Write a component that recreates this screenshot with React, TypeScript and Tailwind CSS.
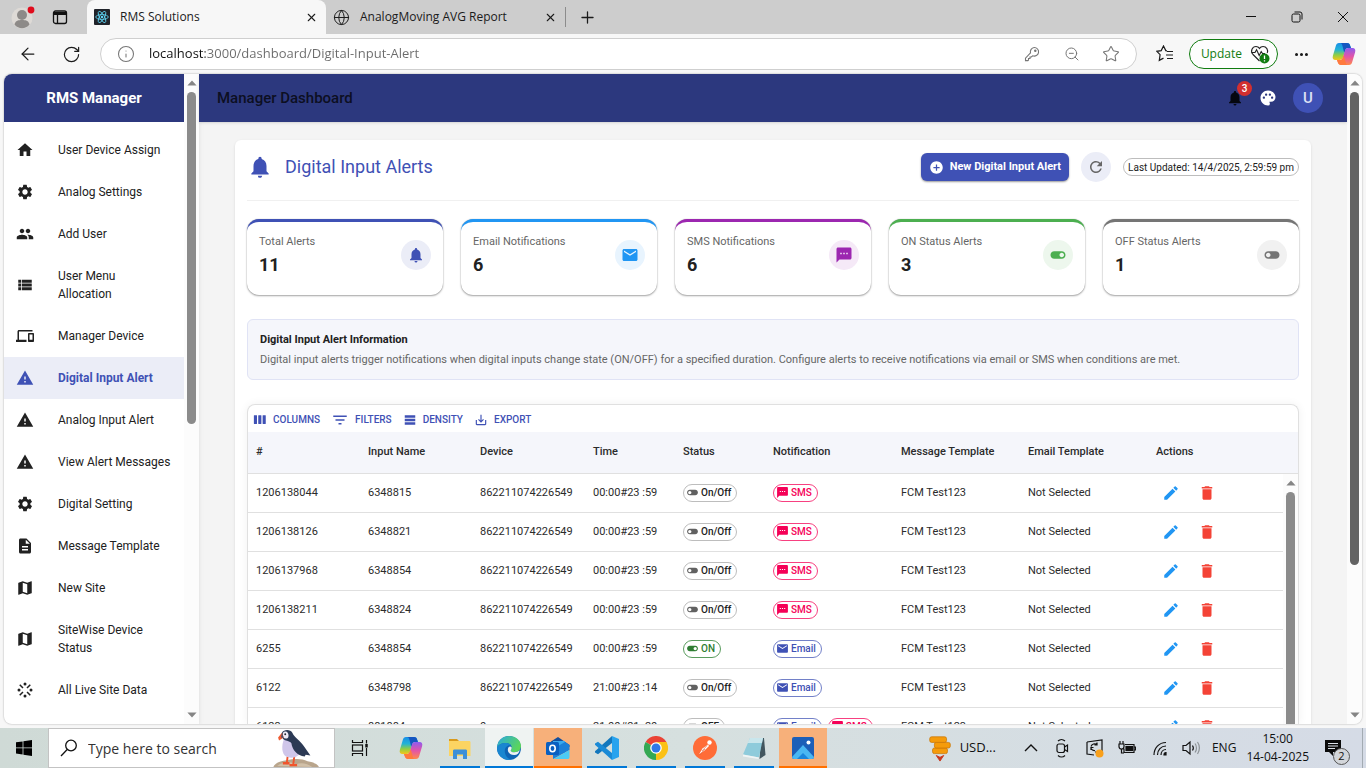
import React from "react";
import clsx from "clsx";
import { ArrowLeft, Ellipsis, Globe, Info, Plus, RotateCw, Star, X, ZoomOut } from "lucide-react";
import {
    MdAddCircle,
    MdCreate,
    MdDelete,
    MdDescription,
    MdDevices,
    MdEmail,
    MdFilterList,
    MdHome,
    MdMap,
    MdNotifications,
    MdPalette,
    MdPeople,
    MdRefresh,
    MdSaveAlt,
    MdSettings,
    MdStream,
    MdTableRows,
    MdTextsms,
    MdToggleOff,
    MdToggleOn,
    MdViewList,
    MdWarning,
} from "react-icons/md";

const menuItems = [
    { label: "User Device Assign", icon: MdHome },
    { label: "Analog Settings", icon: MdSettings },
    { label: "Add User", icon: MdPeople },
    { label: "User Menu\nAllocation", icon: MdViewList },
    { label: "Manager Device", icon: MdDevices },
    { label: "Digital Input Alert", icon: MdWarning, active: true },
    { label: "Analog Input Alert", icon: MdWarning },
    { label: "View Alert Messages", icon: MdWarning },
    { label: "Digital Setting", icon: MdSettings },
    { label: "Message Template", icon: MdDescription },
    { label: "New Site", icon: MdMap },
    { label: "SiteWise Device\nStatus", icon: MdMap },
    { label: "All Live Site Data", icon: MdStream },
];

const stats = [
    { label: "Total Alerts", value: 11, icon: MdNotifications, border: "border-t-[#3f51b5]", badge: "bg-[#ebedf7] text-[#3f51b5]" },
    { label: "Email Notifications", value: 6, icon: MdEmail, border: "border-t-[#2196f3]", badge: "bg-[#e8f4fe] text-[#2196f3]" },
    { label: "SMS Notifications", value: 6, icon: MdTextsms, border: "border-t-[#9c27b0]", badge: "bg-[#f5e9f7] text-[#9c27b0]" },
    { label: "ON Status Alerts", value: 3, icon: MdToggleOn, border: "border-t-[#4caf50]", badge: "bg-[#edf7ed] text-[#4caf50]" },
    { label: "OFF Status Alerts", value: 1, icon: MdToggleOff, border: "border-t-[#757575]", badge: "bg-[#f1f1f1] text-[#757575]" },
];

const rows = [
    { id: "1206138044", name: "6348815", device: "862211074226549", time: "00:00#23 :59", status: "On/Off", notify: ["SMS"] },
    { id: "1206138126", name: "6348821", device: "862211074226549", time: "00:00#23 :59", status: "On/Off", notify: ["SMS"] },
    { id: "1206137968", name: "6348854", device: "862211074226549", time: "00:00#23 :59", status: "On/Off", notify: ["SMS"] },
    { id: "1206138211", name: "6348824", device: "862211074226549", time: "00:00#23 :59", status: "On/Off", notify: ["SMS"] },
    { id: "6255", name: "6348854", device: "862211074226549", time: "00:00#23 :59", status: "ON", notify: ["Email"] },
    { id: "6122", name: "6348798", device: "862211074226549", time: "21:00#23 :14", status: "On/Off", notify: ["Email"] },
    { id: "6123", name: "881884", device: "0", time: "21:00#21 :20", status: "OFF", notify: ["Email", "SMS"] },
];

const columns = [
    { title: "#", width: "w-[112px]" },
    { title: "Input Name", width: "w-[112px]" },
    { title: "Device", width: "w-[113px]" },
    { title: "Time", width: "w-[90px]" },
    { title: "Status", width: "w-[90px]" },
    { title: "Notification", width: "w-[128px]" },
    { title: "Message Template", width: "w-[127px]" },
    { title: "Email Template", width: "w-[128px]" },
    { title: "Actions", width: "w-auto" },
];

const ColumnsIcon = () => (
    <svg viewBox="0 0 24 24" className="size-[15px]" fill="currentColor">
        <rect x="3" y="5" width="5" height="14" rx="0.5" />
        <rect x="10" y="5" width="5" height="14" rx="0.5" />
        <rect x="17" y="5" width="5" height="14" rx="0.5" />
    </svg>
);

const CopilotLogo = ({ className }: { className: string }) => (
    <svg viewBox="0 0 24 24" className={className}>
        <defs>
            <linearGradient id="copilotLeft" x1="0" y1="0" x2="0" y2="1">
                <stop offset="0" stopColor="#1a8fe8" />
                <stop offset="0.4" stopColor="#22b3d6" />
                <stop offset="0.7" stopColor="#8fce45" />
                <stop offset="1" stopColor="#f5c518" />
            </linearGradient>
            <linearGradient id="copilotRight" x1="0" y1="0" x2="0" y2="1">
                <stop offset="0" stopColor="#8e5bf0" />
                <stop offset="0.5" stopColor="#e254a8" />
                <stop offset="1" stopColor="#ff8a4c" />
            </linearGradient>
        </defs>
        <path d="M7 1h8c1.600 0 2.600.8 3.100 2.400L19 6h-3c-1.500 0-2.300.8-2.800 2.300L11 15.500C10.400 17.300 9.400 18 7.800 18H3.500C1 18 .2 16.200.9 13.800L3.700 4.200C4.300 2 5.300 1 7 1Z" fill="url(#copilotLeft)" />
        <path d="M13 1h2c1.600 0 2.600.8 3.100 2.400L19 6h-3c-1.500 0-2.300.8-2.800 2.300l-.9 2.900L10.500 4C10 2.200 9.500 1 8 1Z" fill="#1556c0" />
        <path d="M17 23H9c-1.600 0-2.600-.8-3.100-2.400L5 18h3c1.500 0 2.300-.8 2.800-2.300L13 8.500C13.600 6.700 14.600 6 16.200 6h4.300c2.500 0 3.300 1.800 2.600 4.200l-2.800 9.600C19.700 22 18.700 23 17 23Z" fill="url(#copilotRight)" />
        <path d="M11 23H9c-1.600 0-2.600-.8-3.100-2.400L5 18h3c1.500 0 2.300-.8 2.800-2.300l.9-2.900 1.800 7.200c.5 1.800 1 3 2.500 3Z" fill="#ff7a3d" />
    </svg>
);

const ReactLogo = () => (
    <svg viewBox="0 0 16 16" className="size-4 shrink-0">
        <rect width="16" height="16" rx="1" fill="#20232a" />
        <g fill="none" stroke="#61dafb" strokeWidth="0.8">
            <ellipse cx="8" cy="8" rx="6.300" ry="2.400" />
            <ellipse cx="8" cy="8" rx="6.300" ry="2.400" transform="rotate(60 8 8)" />
            <ellipse cx="8" cy="8" rx="6.300" ry="2.400" transform="rotate(120 8 8)" />
        </g>
        <circle cx="8" cy="8" r="1.200" fill="#61dafb" />
    </svg>
);

const BrowserTabs = () => (
    <div className="flex h-[34px] shrink-0 items-stretch bg-[#cdcdcd] text-[12px] text-[#1b1b1b]">
        <button aria-label="Profile" className="ml-2.5 flex w-7 items-center">
            <svg viewBox="0 0 26 26" className="size-[26px]">
                <circle cx="12" cy="14" r="10.500" fill="#dedad6" />
                <circle cx="12" cy="11" r="5" fill="#8d8a88" />
                <path d="M4.500 20.500c1-4 4-4.500 7.500-4.500s6.500.5 7.500 4.500c-4 5-11 5-15 0Z" fill="#8d8a88" />
                <circle cx="21" cy="6" r="3.400" fill="#e00b1c" />
            </svg>
        </button>
        <button aria-label="Tab actions" className="flex w-[49px] items-center pl-3.5">
            <svg viewBox="0 0 16 16" className="size-4" fill="none" stroke="#111" strokeWidth="1.300">
                <rect x="1.500" y="2" width="13" height="12.500" rx="2" />
                <path d="M1.500 4.500h13" strokeWidth="3" />
                <path d="M5.500 5v9" />
            </svg>
        </button>
        <div className="flex w-[239px] items-center rounded-t-lg bg-[#f7f7f7] pl-[7px] pr-2">
            <ReactLogo />
            <span className="ml-2.5 flex-1">RMS Solutions</span>
            <button aria-label="Close tab">
                <X size={13} strokeWidth={2} />
            </button>
        </div>
        <div className="flex w-[239px] items-center pl-[7px] pr-2">
            <Globe size={17} strokeWidth={1.4} className="shrink-0" />
            <span className="ml-2.5 flex-1">AnalogMoving AVG Report</span>
            <button aria-label="Close tab">
                <X size={13} strokeWidth={2} />
            </button>
        </div>
        <button aria-label="New tab" className="my-[7px] flex items-center border-l border-[#8c8c8c] pl-3">
            <Plus size={19} strokeWidth={1.6} />
        </button>
        <div className="ml-auto flex items-center">
            <button aria-label="Minimize" className="flex w-[46px] justify-center">
                <svg viewBox="0 0 12 12" className="size-3" stroke="#111">
                    <path d="M1 5.500h10" />
                </svg>
            </button>
            <button aria-label="Restore" className="flex w-[46px] justify-center">
                <svg viewBox="0 0 12 12" className="size-3" fill="none" stroke="#111">
                    <rect x="1" y="3" width="8" height="8" rx="1.500" />
                    <path d="M3.500 1h5.500a2 2 0 0 1 2 2v5.500" />
                </svg>
            </button>
            <button aria-label="Close" className="flex w-[46px] justify-center">
                <svg viewBox="0 0 12 12" className="size-3" stroke="#111">
                    <path d="M1 1l10 10M11 1L1 11" />
                </svg>
            </button>
        </div>
    </div>
);

const AddressBar = () => (
    <div className="flex h-10 shrink-0 items-center bg-[#f7f7f7] pl-[18px] pr-2.5 text-[#1b1b1b]">
        <button aria-label="Back">
            <ArrowLeft size={20} strokeWidth={1.5} />
        </button>
        <button aria-label="Reload" className="ml-6">
            <RotateCw size={19} strokeWidth={1.5} />
        </button>
        <div className="ml-[19px] flex h-8 flex-1 items-center rounded-full border border-[#cfcfcf] bg-white px-4 text-[#767676]">
            <Info size={18} strokeWidth={1.4} className="shrink-0" />
            <input
                aria-label="Address"
                readOnly
                value="localhost:3000/dashboard/Digital-Input-Alert"
                className="ml-3.5 min-w-0 flex-1 bg-[linear-gradient(90deg,#111_56px,#6b6b6b_56px)] bg-clip-text text-[13px] text-transparent outline-none"
            />
            <button aria-label="Passwords">
                <svg viewBox="0 0 16 16" className="size-4" fill="none" stroke="currentColor" strokeWidth="1.100">
                    <path d="M10.200 1.500a4.300 4.300 0 1 1-1.500 8.300L7.300 11H6v1.500H4.500V14l-.6.600H1.500v-2.500l5-5.200a4.300 4.300 0 0 1 3.700-5.400Z" />
                    <circle cx="11.300" cy="4.700" r="0.700" fill="currentColor" />
                </svg>
            </button>
            <button aria-label="Zoom" className="ml-6">
                <ZoomOut size={16} strokeWidth={1.5} />
            </button>
            <button aria-label="Favourite" className="ml-[22px]">
                <Star size={18} strokeWidth={1.4} />
            </button>
        </div>
        <button aria-label="Favourites" className="ml-[19px]">
            <svg viewBox="0 0 18 18" className="size-[18px]" fill="none" stroke="currentColor" strokeWidth="1.200">
                <path d="M11 5.800 9.800 5.600 7.500 1 5.200 5.600.8 6.300l3.300 3.400-.8 5.600 4.200-2.200M11 6.500h6M10 10h7M11 13.500h6" />
            </svg>
        </button>
        <button className="ml-[15px] flex h-[30px] items-center gap-2 rounded-full border border-[#107c10] bg-[#fdfdfd] pl-[11px] pr-[7px] text-[12px] text-[#107c10]">
            Update
            <svg viewBox="0 0 20 20" className="size-5" fill="none" stroke="#222" strokeWidth="1.100">
                <path d="M9.500 17 3 10.500C-.2 7 2.500 2.500 6 2.500c1.600 0 2.700.7 3.500 1.900.8-1.200 1.900-1.900 3.500-1.900 3.500 0 5.500 3.500 4.200 6.500" />
                <path d="M1.500 8.500H5l1.600-2.800 2.600 5.800 2-4 1.300 2H15" />
                <circle cx="14.500" cy="14.500" r="5" fill="#107c10" stroke="none" />
                <path d="M14.500 11.500v3.500M14.500 16.200v1.300" stroke="#fff" strokeWidth="1.300" />
            </svg>
        </button>
        <button aria-label="Settings" className="ml-[15px]">
            <Ellipsis size={17} strokeWidth={2.3} />
        </button>
        <button aria-label="Copilot" className="ml-[22px]">
            <CopilotLogo className="size-6" />
        </button>
    </div>
);

const ScrollArrow = ({ down = false }: { down?: boolean }) => (
    <svg viewBox="0 0 10 6" className={clsx("h-1.5 w-2.5 shrink-0", down && "rotate-180")}>
        <path d="M5 0.500 9.600 5.500H0.400Z" fill="#858585" />
    </svg>
);

const Scrollbar = ({ thumb }: { thumb: string }) => (
    <div className="flex w-[15px] shrink-0 flex-col items-center bg-[#fcfcfc] py-1.5">
        <ScrollArrow />
        <div className="flex min-h-0 flex-1 flex-col py-1.5">
            <div className={clsx("w-[9px] rounded-full", thumb)} />
        </div>
        <ScrollArrow down />
    </div>
);

const Sidebar = () => (
    <aside className="z-10 flex w-[195px] shrink-0 bg-white shadow-md">
        <div className="min-w-0 flex-1">
            <div className="flex h-12 items-center justify-center bg-[#2c387e] text-[15px] font-bold text-white">RMS Manager</div>
            <nav className="pt-[7px]">
                {menuItems.map(({ label, icon: Icon, active }) => (
                    <a
                        key={label}
                        href="#"
                        className={clsx(
                            "flex items-center gap-6 whitespace-pre-line py-3 pl-3 pr-2 text-[12px] leading-[18px]",
                            active ? "bg-[#ebedf7] font-bold text-[#3f51b5]" : "text-[#212121]"
                        )}
                    >
                        <span className="flex w-[18px] shrink-0">
                            <Icon size={18} />
                        </span>
                        {label}
                    </a>
                ))}
            </nav>
        </div>
        <Scrollbar thumb="h-[54%] bg-[#8b8b8b]" />
    </aside>
);

const TopBar = () => (
    <header className="z-10 flex h-12 shrink-0 items-center bg-[#2c387e] pl-[18px] pr-6 shadow">
        <h1 className="flex-1 text-[15px] font-medium text-[#0c0f22]">Manager Dashboard</h1>
        <button aria-label="Notifications" className="relative text-[#05070f]">
            <MdNotifications size={18} />
            <span className="absolute -right-2 -top-2 flex size-[15px] items-center justify-center rounded-full bg-[#d32f2f] text-[10px] font-medium text-white">
                3
            </span>
        </button>
        <button aria-label="Theme" className="ml-[15px] text-white">
            <MdPalette size={18} />
        </button>
        <button className="ml-4 flex size-[30px] items-center justify-center rounded-full bg-[#3f51b5] text-[15px] font-medium text-[#dde1f5]">U</button>
    </header>
);

const StatCard = ({ label, value, icon: Icon, border, badge }: (typeof stats)[number]) => (
    <div
        className={clsx(
            "flex h-[76px] justify-between rounded-xl border-t-[3px] bg-white px-3 shadow-[0_1px_2px_rgba(0,0,0,0.35),0_0_1px_rgba(0,0,0,0.3)]",
            border
        )}
    >
        <div className="pt-2">
            <p className="text-[11px] leading-6 text-[#666]">{label}</p>
            <p className="text-[18px] leading-[22px] font-bold text-[#212121]">{value}</p>
        </div>
        <span className={clsx("mt-[18px] flex size-[30px] items-center justify-center rounded-full", badge)}>
            <Icon size={18} />
        </span>
    </div>
);

const Chip = ({ label }: { label: string }) => {
    const styles: Record<string, string> = {
        "On/Off": "border-[#bdbdbd] text-[#212121]",
        OFF: "border-[#bdbdbd] text-[#212121]",
        ON: "border-[#5a9c5e] text-[#2e7d32]",
        SMS: "border-[#f74080] text-[#f50057]",
        Email: "border-[#7280c8] text-[#3f51b5]",
    };

    return (
        <span className={clsx("inline-flex h-[18px] items-center gap-0.5 rounded-full border pl-0.5 pr-[5px] text-[10px] font-medium", styles[label])}>
            {label === "SMS" && <MdTextsms size={13} />}
            {label === "Email" && <MdEmail size={13} />}
            {label === "ON" && <MdToggleOn size={13} />}
            {(label === "On/Off" || label === "OFF") && <MdToggleOff size={13} className="text-[#616161]" />}
            {label}
        </span>
    );
};

const AlertTable = () => (
    <section className="relative mt-6 min-h-0 flex-1 overflow-hidden rounded-t-lg border border-b-0 border-[#e0e0e0] shadow-[0_0_10px_rgba(0,0,0,0.06)]">
        <div className="flex h-[27px] items-center gap-[11px] pl-1 pt-0.5 text-[10px] font-medium text-[#3f51b5]">
            <button className="flex items-center gap-1.5">
                <ColumnsIcon />
                COLUMNS
            </button>
            <button className="flex items-center gap-1.5">
                <MdFilterList size={18} />
                FILTERS
            </button>
            <button className="flex items-center gap-1.5">
                <MdTableRows size={14} />
                DENSITY
            </button>
            <button className="flex items-center gap-1.5">
                <MdSaveAlt size={14} />
                EXPORT
            </button>
        </div>
        <table className="w-full table-fixed border-collapse text-left text-[11px] text-[#2b2b2b]">
            <thead>
                <tr className="h-[41px] border-b border-[#e0e0e0] bg-[#f5f6fb]">
                    {columns.map(({ title, width }) => (
                        <th key={title} className={clsx("px-2 font-medium", width)}>
                            {title}
                        </th>
                    ))}
                </tr>
            </thead>
            <tbody>
                {rows.map((row) => (
                    <tr key={row.id} className="h-[39px] whitespace-nowrap border-b border-[#e0e0e0]">
                        <td className="px-2 pt-0.5">{row.id}</td>
                        <td className="px-2 pt-0.5">{row.name}</td>
                        <td className="px-2 pt-0.5">{row.device}</td>
                        <td className="px-2 pt-0.5">{row.time}</td>
                        <td className="px-2">
                            <div className="flex">
                                <Chip label={row.status} />
                            </div>
                        </td>
                        <td className="px-2">
                            <div className="flex gap-1.5">
                                {row.notify.map((kind) => (
                                    <Chip key={kind} label={kind} />
                                ))}
                            </div>
                        </td>
                        <td className="px-2 pt-0.5">FCM Test123</td>
                        <td className="px-2 pt-0.5">Not Selected</td>
                        <td className="px-2">
                            <div className="flex gap-[18px] pl-1.5">
                                <button aria-label="Edit" className="text-[#2196f3]">
                                    <MdCreate size={18} />
                                </button>
                                <button aria-label="Delete" className="text-[#f44336]">
                                    <MdDelete size={18} />
                                </button>
                            </div>
                        </td>
                    </tr>
                ))}
            </tbody>
        </table>
        <div className="absolute bottom-0 right-0 top-[69px] flex w-[15px] flex-col items-center gap-1.5 bg-[#fcfcfc] pt-1.5">
            <ScrollArrow />
            <div className="w-[9px] flex-1 rounded-t-full bg-[#8b8b8b]" />
        </div>
    </section>
);

const Dashboard = () => (
    <main className="flex min-h-0 flex-1 flex-col bg-[#f4f4f4] px-9 pt-[18px]">
        <div className="flex min-h-0 flex-1 flex-col rounded-t-md bg-white px-3 pt-3 shadow-sm">
            <div className="flex h-[49px] items-start gap-3 border-b border-[#f0f0f0]">
                <MdNotifications size={26} className="mt-0.5 text-[#3f51b5]" />
                <h2 className="flex-1 text-[18px] leading-[30px] text-[#3f51b5]">Digital Input Alerts</h2>
                <button className="mt-px flex h-7 items-center gap-1.5 rounded-md bg-[#3f51b5] px-2 text-[11px] font-bold text-white shadow-[0_1px_2px_rgba(0,0,0,0.4)]">
                    <MdAddCircle size={15} />
                    New Digital Input Alert
                </button>
                <button aria-label="Refresh" className="flex size-[30px] items-center justify-center rounded-full bg-[#ebedf7] text-[#666]">
                    <MdRefresh size={18} />
                </button>
                <span className="mt-1.5 flex h-[18px] items-center rounded-full border border-[#bdbdbd] px-1 text-[10px] text-[#212121]">
                    Last Updated: 14/4/2025, 2:59:59 pm
                </span>
            </div>

            <div className="mt-[18px] grid shrink-0 grid-cols-5 gap-[18px]">
                {stats.map((stat) => (
                    <StatCard key={stat.label} {...stat} />
                ))}
            </div>

            <div className="mt-6 shrink-0 rounded-md border border-[#e0e3f5] bg-[#f5f6fb] px-3 pb-[9px] pt-2.5">
                <h3 className="text-[11px] leading-5 font-bold text-[#212121]">Digital Input Alert Information</h3>
                <p className="text-[11px] leading-5 text-[#666]">
                    Digital input alerts trigger notifications when digital inputs change state (ON/OFF) for a specified duration. Configure alerts to receive
                    notifications via email or SMS when conditions are met.
                </p>
            </div>

            <AlertTable />
        </div>
    </main>
);

const Puffin = () => (
    <svg viewBox="0 0 54 40" className="mr-2 h-[38px] w-[54px] shrink-0 self-end">
        <path d="M0 40c2-5 8-6 14-7 8-2 16-2 22 1 6 1 11 3 12 6Z" fill="#b9a58c" />
        <path d="M4 39c6-5 14-5 20-2 5-2 12-1 17 3Z" fill="#d1c0a8" />
        <path d="M15 29l-1 8M22 29l-1 8" stroke="#f0552d" strokeWidth="2" />
        <path d="M10 36h7M17 38h8" stroke="#f0552d" strokeWidth="2.500" />
        <path d="M12 9c-3 6-4 14 0 19 4 3 11 3 15-1 1-8-4-17-9-19Z" fill="#cfc6ea" />
        <path d="M9 4c2-4 9-4 11 0 2 5 8 8 12 14l7 10-5-1-1 2c-8-1-13-7-14-14-2-3-7-2-9-5Z" fill="#2c3a55" />
        <path d="M10 4c3-3 6-1 6 3 0 3-3 4-6 2Z" fill="#eeeaf6" />
        <path d="M9 4 5 9l1 3 5-3Z" fill="#ef5a31" />
        <path d="M9 4 8 9l3 .5Z" fill="#485068" />
        <circle cx="12.500" cy="5.500" r="1" fill="#272b38" />
    </svg>
);

const FolderLogo = () => (
    <svg viewBox="0 0 24 24" className="size-6">
        <path d="M1 3h8l2 2v4H1Z" fill="#d99a1c" />
        <path d="M1 5h20c1 0 1.500.5 1.500 1.500V20H1Z" fill="#fcd462" />
        <path d="M5 23v-8c0-1 .5-1.500 1.500-1.500h11c1 0 1.500.5 1.500 1.500v8h-4v-4.500H9V23Z" fill="#3d8fd8" />
    </svg>
);

const EdgeLogo = () => (
    <svg viewBox="0 0 24 24" className="size-6">
        <defs>
            <linearGradient id="edgeTop" x1="0" y1="0" x2="1" y2="0.500">
                <stop offset="0" stopColor="#2aa9e0" />
                <stop offset="1" stopColor="#5bd65a" />
            </linearGradient>
        </defs>
        <circle cx="12" cy="12" r="12" fill="#0f64b4" />
        <path d="M0 11.500C.6 4.700 5.800 0 12 0c7 0 12 4.600 12 10 0 3.800-3 6.200-6.500 6.200-2.600 0-3.800-.8-3.800-1.800 0-.7 1-1.200 1-3C14.700 8.800 12 7 8.500 7 4.500 7 1.200 8.800 0 11.500Z" fill="url(#edgeTop)" />
        <path d="M0 11.500C1.200 8.800 4.500 7 8.500 7c2.500 0 4.600 1 5.600 2.500C10.500 8.300 6.800 12 8 17c.7 3.200 3 5.800 6.400 6.700C7 25-.3 19.600 0 11.500Z" fill="#1a86d0" />
        <path d="M14.700 11.400c0 1.800-1 2.300-1 3 0 1 1.200 1.800 3.800 1.800 2 0 4-.7 5.200-2.200-.4 3-2.500 5-5.500 5-4 0-6.800-2.800-6.300-6 .3-2 2-3.300 3.800-1.600Z" fill="#eef2f2" />
    </svg>
);

const OutlookLogo = () => (
    <svg viewBox="0 0 24 24" className="size-6">
        <path d="M12 1 5 5.500V11h18.500V9Z" fill="#124e9c" />
        <path d="M7 5h12v12H7Z" fill="#38a9ee" />
        <path d="M19 6l4.500 3v5L7 23V13Z" fill="#1a7fd8" />
        <path d="M23.500 9.500V21c0 1.500-1 2-2 2H7.500l16-9Z" fill="#4ccbf5" />
        <rect y="6" width="13" height="13" rx="1.500" fill="#0a5fc0" />
        <ellipse cx="6.500" cy="12.500" rx="2.700" ry="3.200" fill="none" stroke="#fff" strokeWidth="1.600" />
    </svg>
);

const VsCodeLogo = () => (
    <svg viewBox="0 0 24 24" className="size-6">
        <path d="M17 0v7L3 18.200 0 16.500v-1.300Z" fill="#1277bd" />
        <path d="M17 24v-7L3 5.800 0 7.500v1.300Z" fill="#1a8ad6" />
        <path d="M17 0l7 3v18l-7 3Z" fill="#28a3ee" />
    </svg>
);

const ChromeLogo = () => (
    <svg viewBox="0 0 24 24" className="size-6">
        <path d="M12 12 1.600 6A12 12 0 0 1 22.400 6Z" fill="#ea4335" />
        <path d="M12 12 22.400 6A12 12 0 0 1 12 24Z" fill="#fbc116" />
        <path d="M12 12v12A12 12 0 0 1 1.600 6Z" fill="#34a853" />
        <path d="M12 6h10.400a12 12 0 0 1 .8 2L17 14.500ZM12 24l5.200-9H12Z" fill="#fbc116" />
        <circle cx="12" cy="12" r="5.800" fill="#fff" />
        <circle cx="12" cy="12" r="4.500" fill="#2f78e8" />
    </svg>
);

const PostmanLogo = () => (
    <svg viewBox="0 0 24 24" className="size-6">
        <circle cx="12" cy="12" r="12" fill="#ff6c37" />
        <circle cx="16.500" cy="6.500" r="2.200" fill="#fff" />
        <path d="M15 8.500 9.500 12.500l-3.500 6 5.500-4 4.500-4.500Z" fill="#fff" />
        <path d="M14 9.500 9 15M12 13l-5.500 6" stroke="#d4532a" strokeWidth="0.600" />
    </svg>
);

const NotepadLogo = () => (
    <svg viewBox="0 0 24 24" className="size-6">
        <path d="M19 2h3l1.500 17-6 4Z" fill="#42565f" />
        <path d="M8 2h13l-4 19.500L1 18.500Z" fill="#8ecbdb" />
        <path d="M8 2h13l-1 5L5.500 7Z" fill="#c9e6ec" />
        <path d="M1 18.500 17 21.500l-.5 1.500L1 20.500Z" fill="#eef4f5" />
    </svg>
);

const PhotosLogo = () => (
    <svg viewBox="0 0 24 24" className="size-6">
        <rect x="1" y="1" width="22" height="22" rx="2" fill="#1c5fb8" />
        <path d="M1 21 12 9l11 12c0 1-1 2-2 2H3c-1 0-2-1-2-2Z" fill="#49b7f2" />
        <path d="M6 23l6-6 6 6Z" fill="#1a86dc" />
        <circle cx="17.500" cy="6.500" r="2" fill="#fff" />
    </svg>
);

const taskbarApps = [
    { name: "Copilot", logo: <CopilotLogo className="size-6" />, tile: "", line: "" },
    { name: "File Explorer", logo: <FolderLogo />, tile: "", line: "w-10 bg-[#0078d7]" },
    { name: "Edge", logo: <EdgeLogo />, tile: "bg-[#eff3f2]", line: "w-12 bg-[#0078d7]" },
    { name: "Outlook", logo: <OutlookLogo />, tile: "bg-[#f7b07a]", line: "w-12 bg-[#ff7000]" },
    { name: "VS Code", logo: <VsCodeLogo />, tile: "", line: "w-10 bg-[#0078d7]" },
    { name: "Chrome", logo: <ChromeLogo />, tile: "", line: "w-10 bg-[#0078d7]" },
    { name: "Postman", logo: <PostmanLogo />, tile: "", line: "w-10 bg-[#0078d7]" },
    { name: "Notepad", logo: <NotepadLogo />, tile: "", line: "w-10 bg-[#0078d7]" },
    { name: "Photos", logo: <PhotosLogo />, tile: "bg-[#f7b07a]", line: "w-12 bg-[#ff7000]" },
];

const Tray = () => (
    <div className="ml-auto flex items-center text-[12px] text-[#111]">
        <button className="flex items-center gap-2 text-[13px]">
            <svg viewBox="0 0 24 30" className="h-7 w-6">
                <g fill="#f59b0b" stroke="#c97606" strokeWidth="0.800">
                    <rect x="4" y="15" width="16" height="6" rx="2" />
                    <rect x="6" y="9" width="17" height="6" rx="2" />
                    <rect x="1" y="3" width="18" height="6" rx="2" />
                </g>
                <path d="M8 23l4 2 4-2-4 6Z" fill="#c9371c" stroke="#c9371c" />
            </svg>
            USD...
        </button>
        <button aria-label="Show hidden icons" className="ml-7">
            <svg viewBox="0 0 14 14" className="size-3.5" fill="none" stroke="currentColor" strokeWidth="1.400">
                <path d="M1 10l6-6 6 6" />
            </svg>
        </button>
        <svg viewBox="0 0 16 20" className="ml-4 h-5 w-4" fill="none" stroke="currentColor" strokeWidth="1.200">
            <rect x="3" y="6" width="7.500" height="8.500" rx="2" />
            <path d="M10.500 9l3-2v6.500l-3-2M4 3c2-2 5-2 7 0M4 17.500c2 2 5 2 7 0" />
        </svg>
        <svg viewBox="0 0 18 20" className="ml-4 h-5 w-[18px]" fill="none" stroke="currentColor" strokeWidth="1.200">
            <path d="M1 4l15-2v12H9M1 4v12l7 1M5 8.500a4 4 0 0 1 6-2M11 4.500v2.500H8.500M5 12V9.500h2.500M5 10.500a4 4 0 0 0 4 2" />
            <circle cx="13.500" cy="15.500" r="4" fill="#f9a01b" stroke="none" />
        </svg>
        <svg viewBox="0 0 18 18" className="ml-3.5 size-[18px]" fill="none" stroke="currentColor" strokeWidth="1.200">
            <path d="M2 2v3M5 2v3M1 5h5v2.500a2.500 2.500 0 0 1-5 0ZM3.500 10v4H6M7 5.500h9v8H6V9.500M16 8h1.500v3H16" />
            <rect x="8" y="7.500" width="6.500" height="4" fill="currentColor" />
        </svg>
        <svg viewBox="0 0 16 18" className="ml-4 h-[18px] w-4" fill="none" stroke="currentColor" strokeWidth="1.200">
            <path d="M2 16C2 9 7 3.500 14 3.500M5.500 16c0-5 3.500-9 8.500-9M9 16c0-3 2-5.500 5-5.500" />
            <path d="M12 16c0-1.500.8-2.500 2-2.500V16Z" fill="currentColor" />
        </svg>
        <svg viewBox="0 0 18 18" className="ml-3.5 size-[18px]" fill="none" stroke="currentColor" strokeWidth="1.200">
            <path d="M1 6.500h3l4-3.500v12l-4-3.500H1Z" />
            <path d="M10.500 6.500c1 1.500 1 3.500 0 5" />
            <path d="M13 4.500c2 2.500 2 6.500 0 9M15.500 3c2.500 3.500 2.500 8.500 0 12" stroke="#8c9296" />
        </svg>
        <span className="ml-3">ENG</span>
        <div className="ml-2.5 flex flex-col items-center leading-[18px]">
            <span>15:00</span>
            <span>14-04-2025</span>
        </div>
        <button aria-label="Notification centre" className="relative ml-[15px] mr-5">
            <svg viewBox="0 0 18 18" className="size-[18px]">
                <path d="M1 1h16v12H9v4l-4-4H1Z" fill="#0b0b0b" />
                <path d="M4 4.500h10M4 7h10M4 9.500h7" stroke="#dbe1e8" />
            </svg>
            <span className="absolute -bottom-2 -right-2 flex size-[17px] items-center justify-center rounded-full border border-[#555] bg-[#d3d6da] text-[11px]">
                2
            </span>
        </button>
        <span className="mr-[3px] h-10 border-r border-[#a3abb2]" />
    </div>
);

const Taskbar = () => (
    <footer className="flex h-10 shrink-0 items-center bg-gradient-to-r from-[#cfdad6] via-[#d6e0df] to-[#d5dbe6]">
        <button aria-label="Start" className="flex w-12 justify-center">
            <svg viewBox="0 0 16 16" className="size-4" fill="#000">
                <path d="M0 2.300 6.600 1.400v6.100H0ZM7.400 1.300 16 0v7.500H7.400ZM0 8.300h6.600v6.200L0 13.600ZM7.400 8.300H16V16l-8.600-1.300Z" />
            </svg>
        </button>
        <label className="flex h-10 w-[287px] items-center gap-2.5 border border-[#c3c3c3] bg-white pl-[11px]">
            <svg viewBox="0 0 18 18" className="size-[18px] shrink-0" fill="none" stroke="#111" strokeWidth="1.300">
                <circle cx="11" cy="6.500" r="5.300" />
                <path d="M7.200 10.500 1 17" />
            </svg>
            <input
                aria-label="Search"
                placeholder="Type here to search"
                className="min-w-0 flex-1 bg-transparent text-[14px] outline-none placeholder:text-[#333]"
            />
            <Puffin />
        </label>
        <button aria-label="Task view" className="mr-0.5 flex h-10 w-[50px] items-center justify-center">
            <svg viewBox="0 0 18 18" className="size-[18px]" fill="none" stroke="#111" strokeWidth="1.200">
                <path d="M1.500 1v2.500h10V1M1.500 17v-2.500h10V17" />
                <rect x="1.500" y="6" width="10" height="6" />
                <path d="M15.500 1v3.500M15.500 9v8" />
                <path d="M15.500 5v3.500" strokeWidth="2.500" />
            </svg>
        </button>
        <div className="flex gap-px">
            {taskbarApps.map(({ name, logo, tile, line }) => (
                <button key={name} aria-label={name} className={clsx("flex h-10 w-12 flex-col items-center", tile)}>
                    <span className="flex flex-1 items-center pt-px">{logo}</span>
                    <span className={clsx("h-0.5", line)} />
                </button>
            ))}
        </div>
        <Tray />
    </footer>
);

export default function App() {
    return (
        <div className="flex h-screen flex-col overflow-hidden bg-[#f7f7f7] font-['Open_Sans','Noto_Sans',sans-serif]">
            <BrowserTabs />
            <AddressBar />
            <div className="mx-1 mb-1 flex min-h-0 flex-1 overflow-hidden rounded-lg font-[Roboto,sans-serif] shadow-[0_0_2px_rgba(0,0,0,0.35)]">
                <Sidebar />
                <div className="flex min-w-0 flex-1 flex-col">
                    <TopBar />
                    <Dashboard />
                </div>
                <Scrollbar thumb="h-[77%] bg-[#636363]" />
            </div>
            <Taskbar />
        </div>
    );
}
